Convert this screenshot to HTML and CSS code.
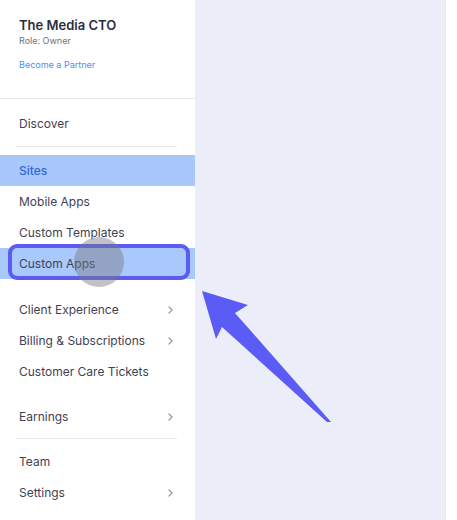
FILE: index.html
```html
<!DOCTYPE html>
<html lang="en">
<head>
<meta charset="utf-8">
<title>Menu</title>
<link rel="stylesheet" href="styles.css">
</head>
<body>
<div class="page">
  <nav class="sidebar">
    <div class="header">
      <div class="title">The Media CTO</div>
      <div class="role">Role: Owner</div>
      <div class="link">Become a Partner</div>
    </div>
    <div class="group first">
      <div class="item">Discover</div>
    </div>
    <div class="divider"></div>
    <div class="group">
      <div class="item active">Sites</div>
      <div class="item">Mobile Apps</div>
      <div class="item">Custom Templates</div>
      <div class="item selected">Custom Apps<span class="outline"></span><span class="cursor"></span></div>
    </div>
    <div class="group spaced">
      <div class="item">Client Experience<svg class="chev" viewBox="0 0 6 10" width="5" height="8"><path d="M1 1l4 4-4 4" fill="none" stroke="#8c8f9b" stroke-width="1.4" stroke-linecap="round" stroke-linejoin="round"/></svg></div>
      <div class="item">Billing &amp; Subscriptions<svg class="chev" viewBox="0 0 6 10" width="5" height="8"><path d="M1 1l4 4-4 4" fill="none" stroke="#8c8f9b" stroke-width="1.4" stroke-linecap="round" stroke-linejoin="round"/></svg></div>
      <div class="item">Customer Care Tickets</div>
    </div>
    <div class="group spaced-sm">
      <div class="item">Earnings<svg class="chev" viewBox="0 0 6 10" width="5" height="8"><path d="M1 1l4 4-4 4" fill="none" stroke="#8c8f9b" stroke-width="1.4" stroke-linecap="round" stroke-linejoin="round"/></svg></div>
    </div>
    <div class="divider tight"></div>
    <div class="group">
      <div class="item">Team</div>
      <div class="item">Settings<svg class="chev" viewBox="0 0 6 10" width="5" height="8"><path d="M1 1l4 4-4 4" fill="none" stroke="#8c8f9b" stroke-width="1.4" stroke-linecap="round" stroke-linejoin="round"/></svg></div>
    </div>
  </nav>
  <main class="content">
    <svg class="arrow" width="250" height="520" viewBox="195 0 250 520">
      <polygon points="202,291 248,305 235,313 331,422 327,422 222,327 216,339" fill="#5b5cf6"/>
    </svg>
  </main>
  <div class="edge"></div>
</div>
</body>
</html>
```

FILE: styles.css
```css
* { box-sizing: border-box; }
html, body { margin: 0; padding: 0; }
body {
  width: 457px;
  height: 520px;
  overflow: hidden;
  background: #ffffff;
  font-family: "Inter", "Liberation Sans", sans-serif;
}
.page {
  display: flex;
  height: 520px;
}
.sidebar {
  width: 195px;
  flex: none;
  background: #ffffff;
  display: flex;
  flex-direction: column;
}
.header {
  height: 99px;
  padding: 16px 19px 0;
  border-bottom: 1px solid #e7e8ee;
}
.title {
  font-size: 13px;
  font-weight: 600;
  line-height: 18px;
  color: #2a2d3c;
}
.role {
  font-size: 9px;
  line-height: 14px;
  color: #6f727d;
}
.link {
  margin-top: 10px;
  font-size: 9px;
  line-height: 14px;
  color: #4b8ef5;
}
.group.first { padding-top: 9px; }
.group.spaced { margin-top: 15px; }
.group.spaced-sm { margin-top: 14px; }
.divider {
  height: 1px;
  background: #e8e9ef;
  margin: 7px 18px 8px 16px;
}
.divider.tight {
  margin: 6px 18px 7px 16px;
}
.item {
  position: relative;
  height: 31px;
  display: flex;
  align-items: center;
  justify-content: space-between;
  padding: 0 22px 0 19px;
  font-size: 12px;
  color: #3f4252;
}
.item.active {
  background: #a8c8fc;
  color: #3566d6;
  font-weight: 500;
}
.item.selected {
  background: #a9c8fc;
}
.outline {
  position: absolute;
  left: 8px;
  right: 5px;
  top: -4px;
  bottom: -1px;
  border: 4px solid #5c5cf3;
  border-radius: 9px;
}
.cursor {
  position: absolute;
  left: 74px;
  top: -11px;
  width: 50px;
  height: 50px;
  border-radius: 50%;
  background: rgba(120, 120, 128, 0.45);
}
.chev { flex: none; }
.content {
  position: relative;
  width: 250px;
  flex: none;
  background: #ebeef8;
}
.arrow {
  position: absolute;
  left: 0;
  top: 0;
}
.edge {
  flex: 1;
  background: #ffffff;
  border-left: 1px solid #e6e9f3;
}
```
